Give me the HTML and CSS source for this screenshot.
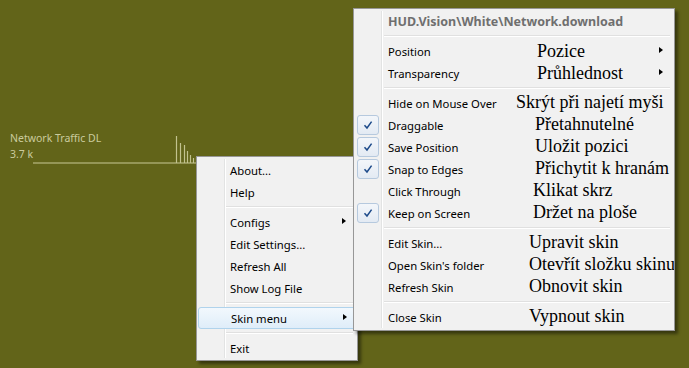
FILE: index.html
```html
<!DOCTYPE html>
<html lang="cs">
<head>
    <meta charset="UTF-8">
    <title>Rainmeter - Skin menu</title>
    <link rel="stylesheet" href="styles.css">
</head>
<body>
    <div class="desktop">
        <!-- widget na ploše -->
        <div class="meter">
            <div class="meter-label">Network Traffic DL</div>
            <div class="meter-value">3.7 k</div>
            <svg class="meter-graph" width="200" height="40" viewBox="0 0 200 40">
                <line x1="33" y1="35" x2="200" y2="35" stroke="#a7a76c" stroke-width="1.5"/>
                <g stroke="#c2c28e" stroke-width="1.2">
                    <line x1="176.5" y1="35" x2="176.5" y2="8"/>
                    <line x1="180.5" y1="35" x2="180.5" y2="15"/>
                    <line x1="184.5" y1="35" x2="184.5" y2="17"/>
                    <line x1="187.5" y1="35" x2="187.5" y2="23"/>
                    <line x1="190.5" y1="35" x2="190.5" y2="27"/>
                    <line x1="193.5" y1="35" x2="193.5" y2="30"/>
                    <line x1="196.5" y1="35" x2="196.5" y2="29"/>
                </g>
            </svg>
        </div>

        <!-- hlavní menu -->
        <div class="menu menu-main">
            <div class="item"><span class="label">About...</span></div>
            <div class="item"><span class="label">Help</span></div>
            <div class="sep"></div>
            <div class="item"><span class="label">Configs</span><span class="arrow"></span></div>
            <div class="item"><span class="label">Edit Settings...</span></div>
            <div class="item"><span class="label">Refresh All</span></div>
            <div class="item"><span class="label">Show Log File</span></div>
            <div class="sep"></div>
            <div class="item item-hover"><span class="label">Skin menu</span><span class="arrow"></span></div>
            <div class="sep"></div>
            <div class="item"><span class="label">Exit</span></div>
        </div>

        <!-- menu skinu -->
        <div class="menu menu-skin">
            <div class="item item-title"><span class="label">HUD.Vision\White\Network.download</span></div>
            <div class="sep"></div>
            <div class="item"><span class="label">Position</span><span class="note note-far">Pozice</span><span class="arrow"></span></div>
            <div class="item"><span class="label">Transparency</span><span class="note note-far">Průhlednost</span><span class="arrow"></span></div>
            <div class="sep"></div>
            <div class="item"><span class="label">Hide on Mouse Over</span><span class="note note-wide">Skrýt při najetí myši</span></div>
            <div class="item"><span class="check"><svg width="10" height="10" viewBox="0 0 10 10"><path d="M1.5 5.2 L4 8 L8.6 1.6" fill="none" stroke="#1d4a8a" stroke-width="1.5"/></svg></span><span class="label">Draggable</span><span class="note">Přetahnutelné</span></div>
            <div class="item"><span class="check"><svg width="10" height="10" viewBox="0 0 10 10"><path d="M1.5 5.2 L4 8 L8.6 1.6" fill="none" stroke="#1d4a8a" stroke-width="1.5"/></svg></span><span class="label">Save Position</span><span class="note">Uložit pozici</span></div>
            <div class="item"><span class="check"><svg width="10" height="10" viewBox="0 0 10 10"><path d="M1.5 5.2 L4 8 L8.6 1.6" fill="none" stroke="#1d4a8a" stroke-width="1.5"/></svg></span><span class="label">Snap to Edges</span><span class="note">Přichytit k hranám</span></div>
            <div class="item"><span class="label">Click Through</span><span class="note note-near">Klikat skrz</span></div>
            <div class="item"><span class="check"><svg width="10" height="10" viewBox="0 0 10 10"><path d="M1.5 5.2 L4 8 L8.6 1.6" fill="none" stroke="#1d4a8a" stroke-width="1.5"/></svg></span><span class="label">Keep on Screen</span><span class="note note-near">Držet na ploše</span></div>
            <div class="sep"></div>
            <div class="item"><span class="label">Edit Skin...</span><span class="note note-low">Upravit skin</span></div>
            <div class="item"><span class="label">Open Skin's folder</span><span class="note note-low">Otevřít složku skinu</span></div>
            <div class="item"><span class="label">Refresh Skin</span><span class="note note-low">Obnovit skin</span></div>
            <div class="sep"></div>
            <div class="item"><span class="label">Close Skin</span><span class="note note-low">Vypnout skin</span></div>
        </div>
    </div>
</body>
</html>
```

FILE: styles.css
```css
body {
    margin: 0;
    background-color: #626419;
    font-family: "Noto Sans", "Open Sans", sans-serif;
}

.desktop {
    position: relative;
    width: 689px;
    height: 368px;
    overflow: hidden;
}

/* widget */
.meter {
    position: absolute;
    left: 0;
    top: 128px;
    width: 230px;
    height: 40px;
    padding-left: 10px;
    color: #cacb9d;
    font-size: 10.5px;
    line-height: 13px;
}

.meter-label {
    margin-top: 4px;
}

.meter-value {
    margin-top: 3px;
}

.meter-graph {
    position: absolute;
    left: 0;
    top: 0;
}

/* menu */
.menu {
    position: absolute;
    box-sizing: border-box;
    padding: 2px;
    border: 1px solid #979797;
    background: #f1f1f1;
    box-shadow: 3px 3px 3px rgba(0, 0, 0, 0.45);
    font-size: 11.3px;
    color: #000;
    overflow: hidden;
}

.menu::before {
    content: "";
    position: absolute;
    top: 2px;
    bottom: 2px;
    left: 27px;
    width: 1px;
    background: #e2e3e3;
    border-right: 1px solid #fff;
}

.menu-main {
    left: 196px;
    top: 156px;
    width: 162px;
    height: 205px;
}

.menu-skin {
    left: 353px;
    top: 8px;
    width: 322px;
    height: 323px;
    z-index: 2;
}

.item {
    position: relative;
    display: flex;
    align-items: center;
    height: 22px;
    padding-left: 31px;
    white-space: nowrap;
}

.menu-skin .item {
    padding-left: 32px;
}

.label {
    flex: none;
}

.menu-skin .label {
    width: 135px;
}

.item-title {
    height: 21px;
    font-weight: bold;
    color: #6f6f6f;
    font-size: 12.5px;
}

.menu-skin .item-title .label {
    width: auto;
}

.item-hover {
    margin: 0 -1px 0 -1px;
    padding-left: 32px;
    height: 20px;
    border: 1px solid #b0d3ec;
    border-radius: 3px;
    background: linear-gradient(#f2f8fd, #dfedf9);
}

.arrow {
    position: absolute;
    right: 9px;
    top: 7px;
    width: 0;
    height: 0;
    border-top: 3.5px solid transparent;
    border-bottom: 3.5px solid transparent;
    border-left: 4px solid #000;
}

.item-hover .arrow {
    right: 8px;
    top: 6px;
}

.sep {
    height: 1px;
    margin: 3px 2px 3px 28px;
    background: #e0e0e0;
    border-bottom: 1px solid #fff;
}

.menu-main .sep {
    margin-left: 27px;
}

.check {
    position: absolute;
    left: 1px;
    top: 1px;
    box-sizing: border-box;
    width: 22px;
    height: 20px;
    display: flex;
    align-items: center;
    justify-content: center;
    border: 1px solid #b6c9de;
    border-radius: 3px;
    background: linear-gradient(#f3f6fa, #e3eaf3);
}

/* české popisky */
.note {
    font-family: "Liberation Serif", "Times New Roman", serif;
    font-size: 18px;
    line-height: 20px;
    margin-left: 12px;
    margin-top: -3px;
}

.note-far {
    margin-left: 14px;
    margin-top: -1px;
}

.note-wide {
    margin-left: -7px;
}

.note-near {
    margin-left: 10px;
}

.note-low {
    margin-left: 6px;
    margin-top: -2px;
}
```
